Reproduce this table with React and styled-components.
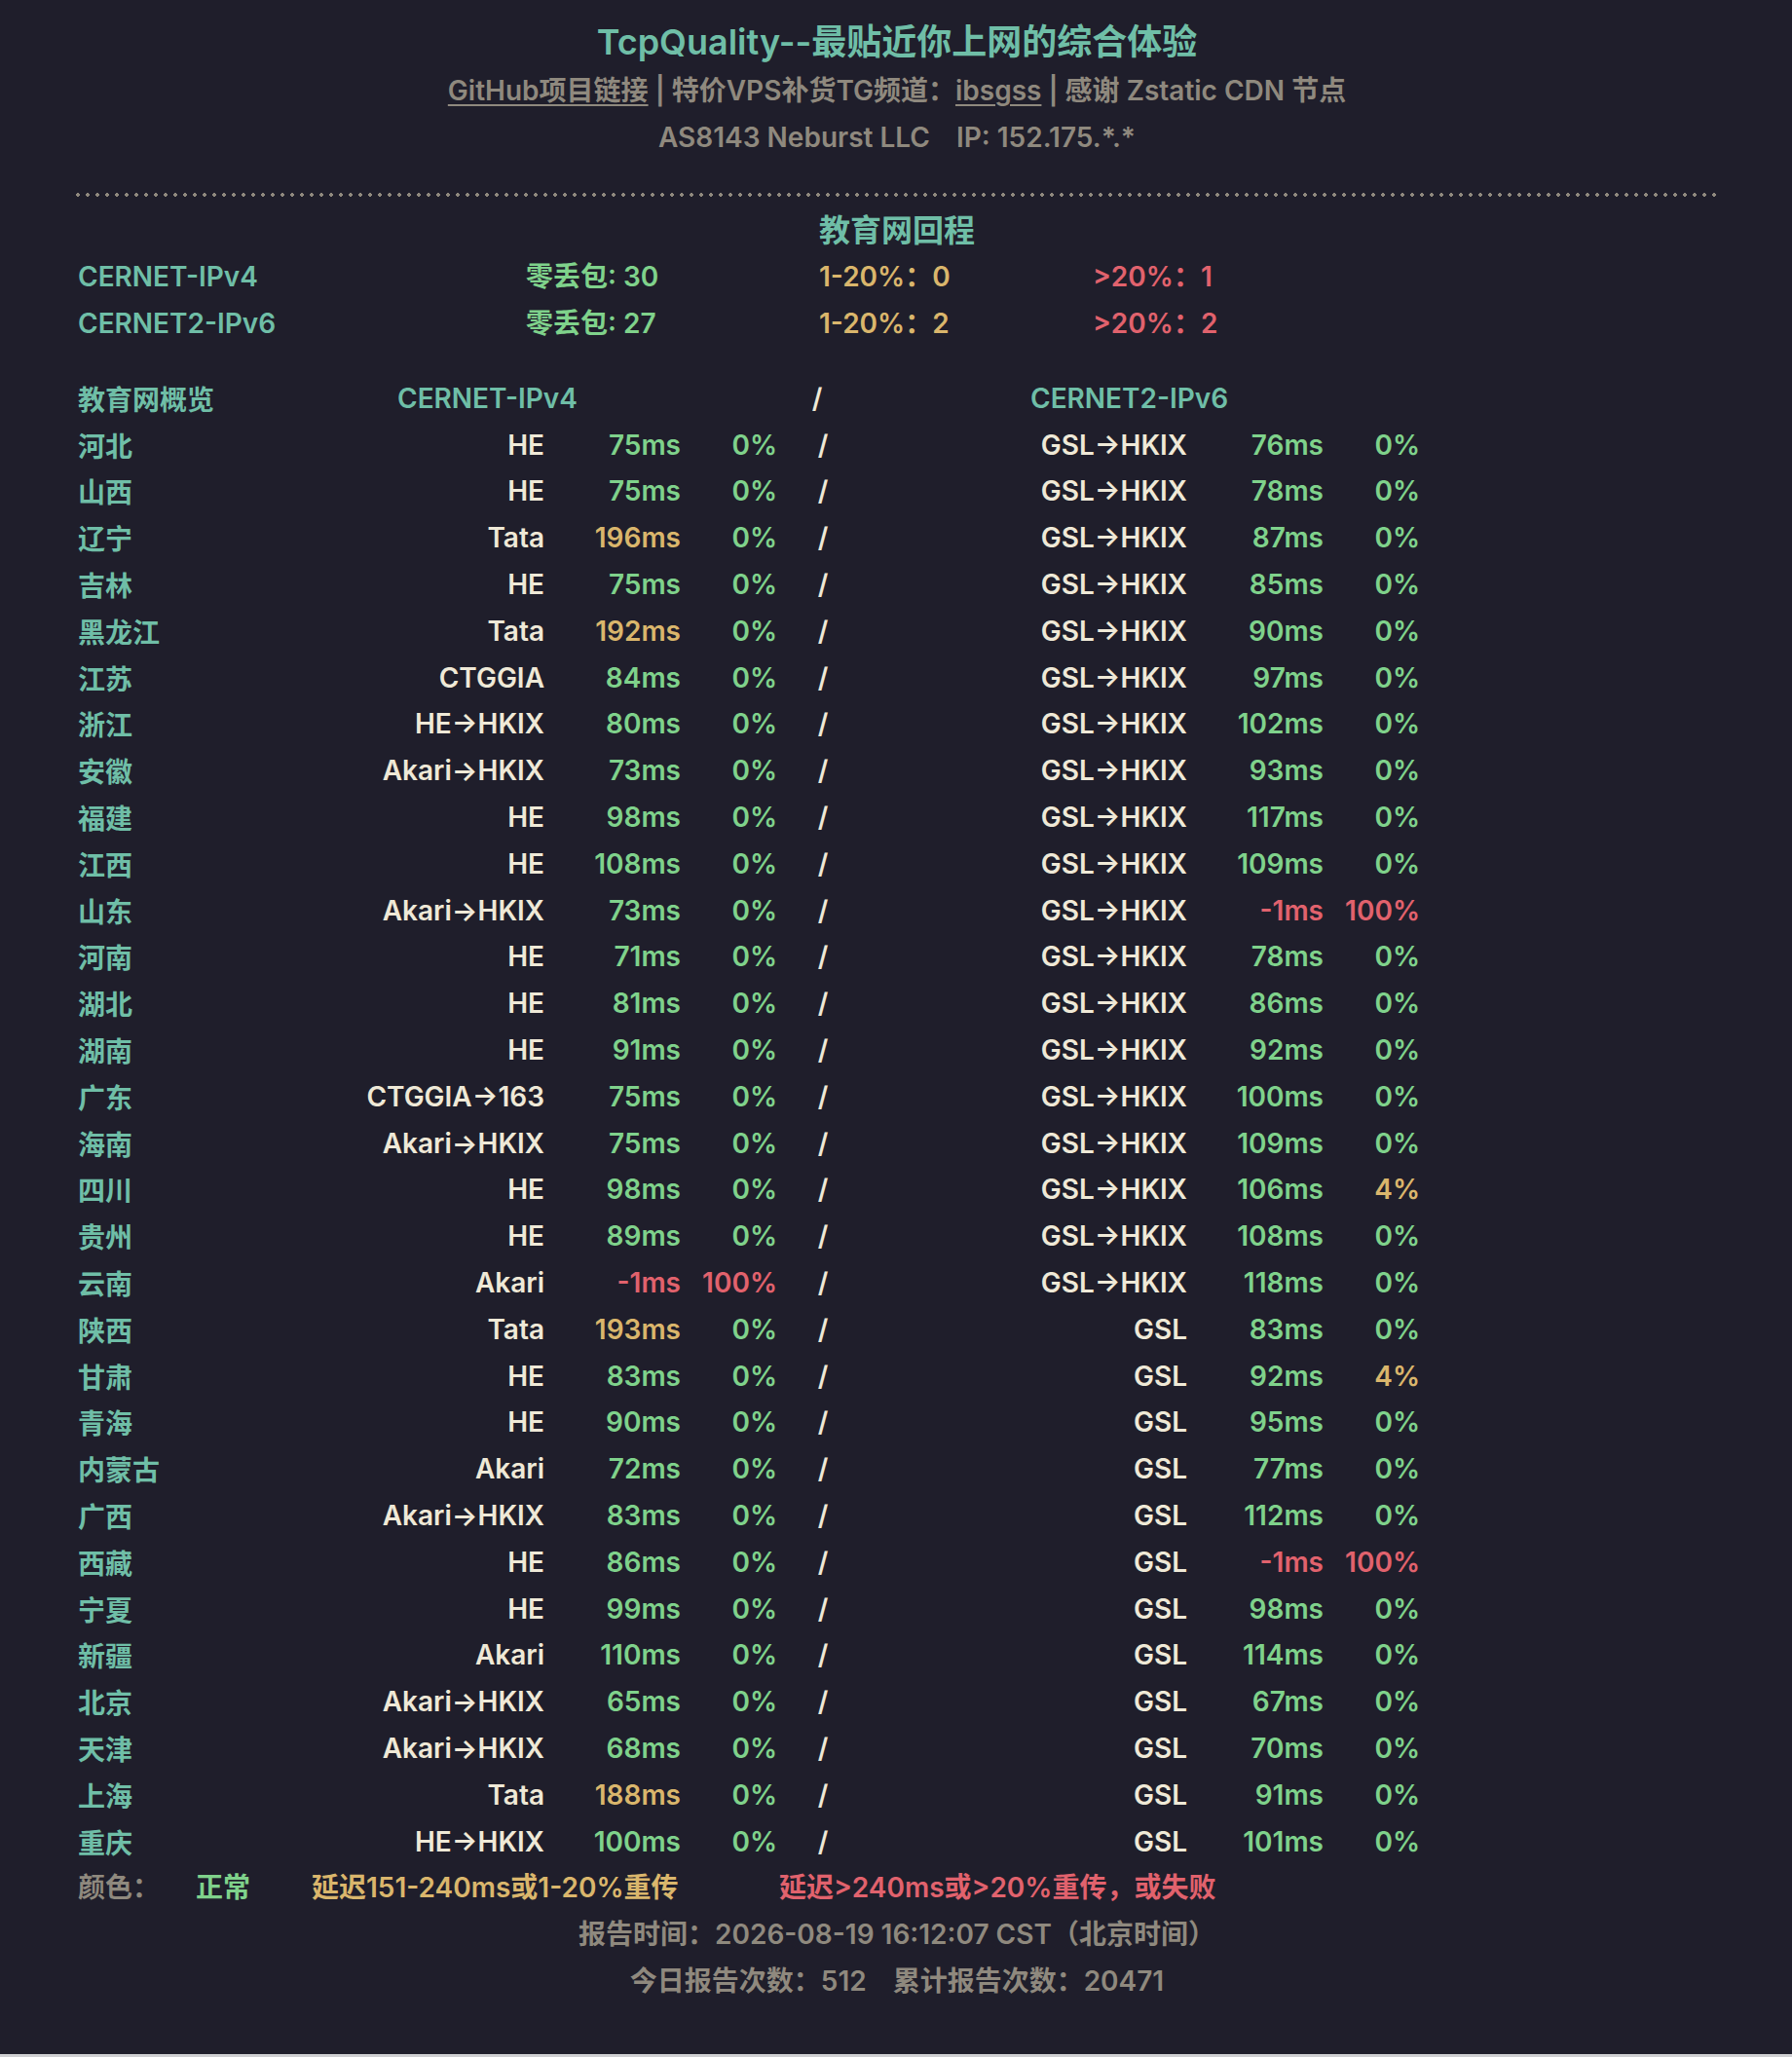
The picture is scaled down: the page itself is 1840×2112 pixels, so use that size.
import React from "react";
import styled, { createGlobalStyle } from "styled-components";

const C = {
  bg: "#1f1e2b",
  teal: "#6fbea7",
  green: "#7fd28b",
  yellow: "#dab66c",
  red: "#e1626d",
  cream: "#efe9d7",
  grey: "#8f897e",
};

const GlobalStyle = createGlobalStyle`
  html { margin: 0; padding: 0; background: #cfcfd2; }
  body {
    margin: 0;
    padding: 0;
    background: transparent;
    font-family: Inter, "Noto Sans CJK SC", "Noto Sans", sans-serif;
    font-weight: 600;
    font-size: 28px;
    color: ${C.cream};
  }
`;

const Page = styled.div`
  min-height: 2109px;
  box-sizing: border-box;
  padding: 17px 78px 40px 80px;
  background: ${C.bg};
`;

const Header = styled.header`
  display: flex;
  flex-direction: column;
  align-items: center;
`;

const Title = styled.h1`
  margin: 0;
  font-size: 36px;
  line-height: 52px;
  font-weight: 600;
  color: ${C.teal};
`;

const InfoLine = styled.div`
  font-size: 28px;
  line-height: 48px;
  color: ${C.grey};
  display: flex;
  align-items: center;
  white-space: pre;
`;

const Link = styled.a`
  color: ${C.grey};
  text-decoration: underline;
  text-decoration-thickness: 2px;
  text-underline-offset: 4px;
`;

const Gap = styled.span`
  display: inline-block;
  width: ${(p) => p.$w}px;
`;

const Divider = styled.div`
  height: 4px;
  margin: 33px 0 11px -2px;
  background-image: radial-gradient(circle at 2px 2px, ${C.grey} 1.6px, transparent 2.1px);
  background-size: 10px 4px;
  background-repeat: repeat-x;
`;

const SectionTitle = styled.div`
  text-align: center;
  font-size: 32px;
  line-height: 47px;
  color: ${C.teal};
`;

const SummaryRow = styled.div`
  display: grid;
  grid-template-columns: 460px 301px 281px auto;
  line-height: 48px;
`;

const Cell = styled.div`
  color: ${(p) => p.$color || C.cream};
  text-align: ${(p) => p.$align || "left"};
  white-space: pre;
`;

const Table = styled.div`
  margin-top: 29px;
  display: grid;
  grid-template-columns: 200px 279px 140px 99px 94px 327px 140px 99px;
  grid-auto-rows: 47.8px;
  align-items: center;
`;

const HeadCell = styled.div`
  color: ${C.teal};
  grid-column: ${(p) => p.$col};
  padding-left: ${(p) => p.$pad || 0}px;
  white-space: pre;
`;

const Slash = styled.div`
  text-align: center;
  color: ${C.cream};
  padding-right: ${(p) => (p.$head ? 12 : 0)}px;
`;

const Legend = styled.div`
  margin-top: -1px;
  display: grid;
  grid-template-columns: 121px 119px 480px auto;
  line-height: 48px;
`;

const FooterLine = styled.div`
  text-align: center;
  line-height: 48px;
  color: ${C.grey};
  white-space: pre;
`;

const rows = [
  ["河北", "HE", 75, 0, "GSL→HKIX", 76, 0],
  ["山西", "HE", 75, 0, "GSL→HKIX", 78, 0],
  ["辽宁", "Tata", 196, 0, "GSL→HKIX", 87, 0],
  ["吉林", "HE", 75, 0, "GSL→HKIX", 85, 0],
  ["黑龙江", "Tata", 192, 0, "GSL→HKIX", 90, 0],
  ["江苏", "CTGGIA", 84, 0, "GSL→HKIX", 97, 0],
  ["浙江", "HE→HKIX", 80, 0, "GSL→HKIX", 102, 0],
  ["安徽", "Akari→HKIX", 73, 0, "GSL→HKIX", 93, 0],
  ["福建", "HE", 98, 0, "GSL→HKIX", 117, 0],
  ["江西", "HE", 108, 0, "GSL→HKIX", 109, 0],
  ["山东", "Akari→HKIX", 73, 0, "GSL→HKIX", -1, 100],
  ["河南", "HE", 71, 0, "GSL→HKIX", 78, 0],
  ["湖北", "HE", 81, 0, "GSL→HKIX", 86, 0],
  ["湖南", "HE", 91, 0, "GSL→HKIX", 92, 0],
  ["广东", "CTGGIA→163", 75, 0, "GSL→HKIX", 100, 0],
  ["海南", "Akari→HKIX", 75, 0, "GSL→HKIX", 109, 0],
  ["四川", "HE", 98, 0, "GSL→HKIX", 106, 4],
  ["贵州", "HE", 89, 0, "GSL→HKIX", 108, 0],
  ["云南", "Akari", -1, 100, "GSL→HKIX", 118, 0],
  ["陕西", "Tata", 193, 0, "GSL", 83, 0],
  ["甘肃", "HE", 83, 0, "GSL", 92, 4],
  ["青海", "HE", 90, 0, "GSL", 95, 0],
  ["内蒙古", "Akari", 72, 0, "GSL", 77, 0],
  ["广西", "Akari→HKIX", 83, 0, "GSL", 112, 0],
  ["西藏", "HE", 86, 0, "GSL", -1, 100],
  ["宁夏", "HE", 99, 0, "GSL", 98, 0],
  ["新疆", "Akari", 110, 0, "GSL", 114, 0],
  ["北京", "Akari→HKIX", 65, 0, "GSL", 67, 0],
  ["天津", "Akari→HKIX", 68, 0, "GSL", 70, 0],
  ["上海", "Tata", 188, 0, "GSL", 91, 0],
  ["重庆", "HE→HKIX", 100, 0, "GSL", 101, 0],
];

const latColor = (ms) => (ms < 0 || ms > 240 ? C.red : ms > 150 ? C.yellow : C.green);
const lossColor = (l) => (l > 20 ? C.red : l > 0 ? C.yellow : C.green);

function Measure({ isp, ms, loss }) {
  return (
    <>
      <Cell $align="right">{isp}</Cell>
      <Cell $align="right" $color={latColor(ms)}>{ms}ms</Cell>
      <Cell $align="right" $color={lossColor(loss)}>{loss}%</Cell>
    </>
  );
}

export default function App() {
  return (
    <Page>
      <GlobalStyle />
      <Header>
        <Title>TcpQuality--最贴近你上网的综合体验</Title>
        <InfoLine>
          <Link href="#">GitHub项目链接</Link> | 特价VPS补货TG频道：<Link href="#">ibsgss</Link> | 感谢 Zstatic CDN 节点
        </InfoLine>
        <InfoLine>
          AS8143 Neburst LLC<Gap $w={27} />IP: 152.175.*.*
        </InfoLine>
      </Header>
      <Divider />
      <SectionTitle>教育网回程</SectionTitle>
      <SummaryRow>
        <Cell $color={C.teal}>CERNET-IPv4</Cell>
        <Cell $color={C.green}>零丢包: 30</Cell>
        <Cell $color={C.yellow}>1-20%：0</Cell>
        <Cell $color={C.red}>&gt;20%：1</Cell>
      </SummaryRow>
      <SummaryRow>
        <Cell $color={C.teal}>CERNET2-IPv6</Cell>
        <Cell $color={C.green}>零丢包: 27</Cell>
        <Cell $color={C.yellow}>1-20%：2</Cell>
        <Cell $color={C.red}>&gt;20%：2</Cell>
      </SummaryRow>
      <Table>
        <HeadCell $col="1">教育网概览</HeadCell>
        <HeadCell $col="2 / span 3" $pad={128}>CERNET-IPv4</HeadCell>
        <Slash $head>/</Slash>
        <HeadCell $col="6 / span 3" $pad={166}>CERNET2-IPv6</HeadCell>
        {rows.map(([name, i4, m4, l4, i6, m6, l6]) => (
          <React.Fragment key={name}>
            <Cell $color={C.teal}>{name}</Cell>
            <Measure isp={i4} ms={m4} loss={l4} />
            <Slash>/</Slash>
            <Measure isp={i6} ms={m6} loss={l6} />
          </React.Fragment>
        ))}
      </Table>
      <Legend>
        <Cell $color={C.grey}>颜色：</Cell>
        <Cell $color={C.green}>正常</Cell>
        <Cell $color={C.yellow}>延迟151-240ms或1-20%重传</Cell>
        <Cell $color={C.red}>延迟&gt;240ms或&gt;20%重传，或失败</Cell>
      </Legend>
      <FooterLine>报告时间：2026-08-19 16:12:07 CST（北京时间）</FooterLine>
      <FooterLine>今日报告次数：512<Gap $w={27} />累计报告次数：20471</FooterLine>
    </Page>
  );
}
